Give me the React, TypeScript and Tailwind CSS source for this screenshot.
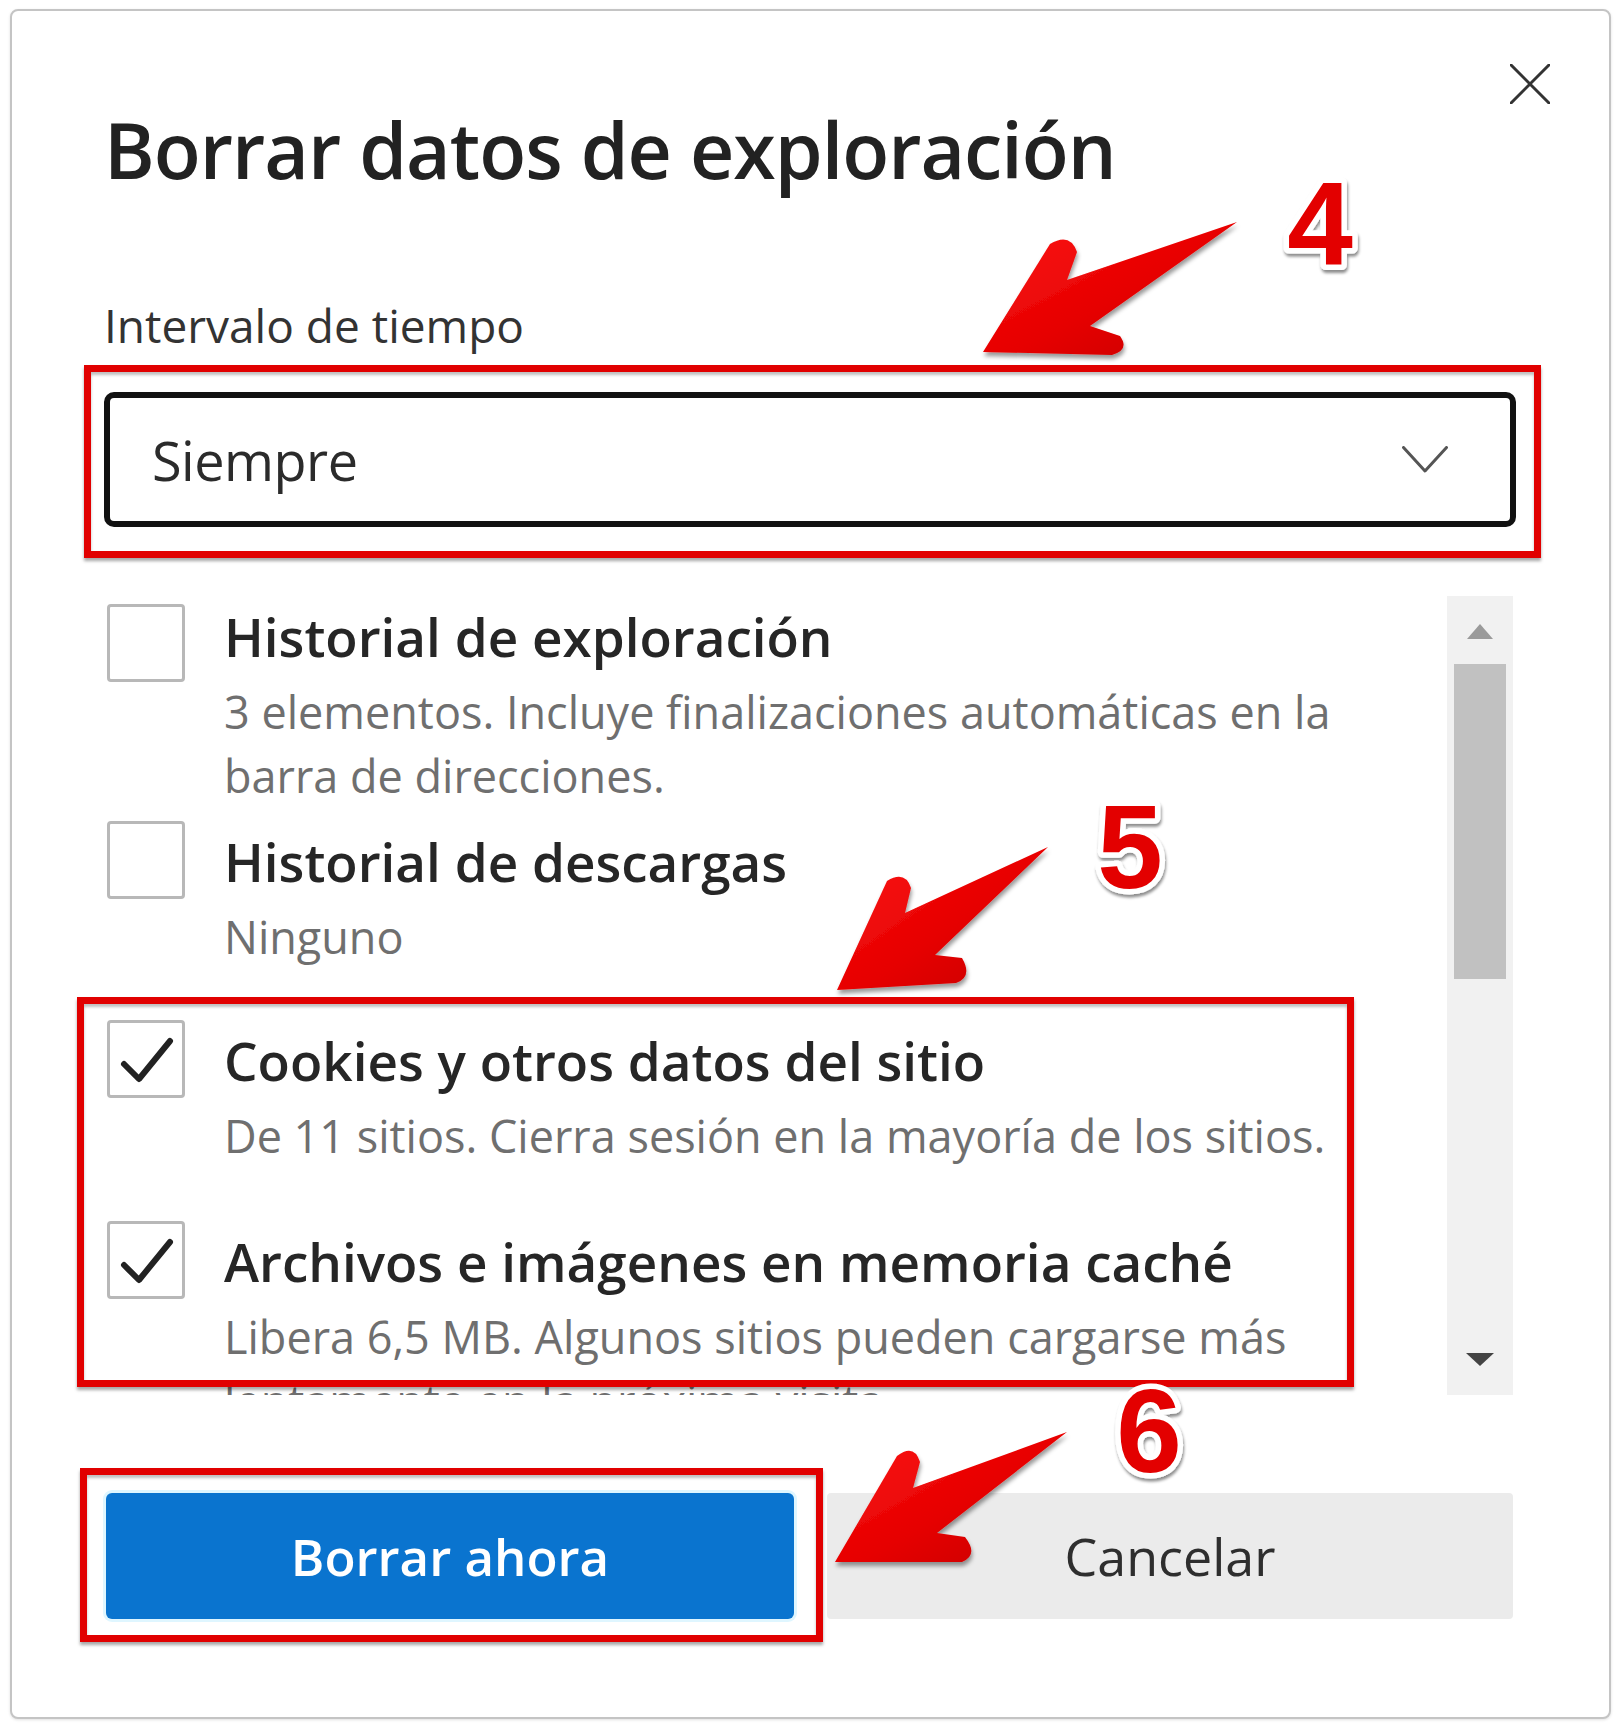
import React from "react";

const UI = { fontFamily: '"Open Sans", "Noto Sans", Arial, sans-serif' };

function Check() {
  return (
    <svg width="72" height="72" viewBox="0 0 72 72" className="block">
      <path d="M14 41 L29 56 L60 18" fill="none" stroke="#222" strokeWidth="6" strokeLinecap="round" strokeLinejoin="round" />
    </svg>
  );
}

function Item({
  mt,
  boxMt,
  checked,
  title,
  lines,
}: {
  mt: string;
  boxMt: string;
  checked: boolean;
  title: string;
  lines: string[];
}) {
  return (
    <div className={`flex items-start ${mt}`}>
      <div className={`${boxMt} flex h-[78px] w-[78px] shrink-0 items-center justify-center rounded-[4px] border-[3px] border-[#b8b8b8] bg-white`}>
        {checked ? <Check /> : null}
      </div>
      <div className="ml-[39px] flex flex-col">
        <div className="whitespace-nowrap text-[53px] font-semibold leading-[76px] text-[#262626]">{title}</div>
        <div className="mt-[5px] flex flex-col">
          {lines.map((l, i) => (
            <div key={i} className="whitespace-nowrap text-[45px] leading-[64px] text-[#6f6f6f]">
              {l}
            </div>
          ))}
        </div>
      </div>
    </div>
  );
}

export default function App() {
  return (
    <div className="relative h-[1728px] w-[1620px] overflow-hidden bg-white pl-[10px] pt-[9px]" style={UI}>
      {/* Dialog */}
      <div className="flex h-[1710px] w-[1601px] flex-col rounded-[8px] border-2 border-[#c4c4c4] bg-white pl-[92px] pr-[93px] pt-[53px] shadow-[0_1px_3px_rgba(0,0,0,0.12)]">
        {/* Header */}
        <div className="flex items-start justify-between">
          <div className="mt-[36px] whitespace-nowrap text-[77px] font-semibold leading-[100px] tracking-[-1px] text-[#222]">
            Borrar datos de exploración
          </div>
          <div className="-mr-[34px] h-[40px] w-[40px]">
            <svg width="40" height="40" viewBox="0 0 40 40" className="block">
              <path d="M1 1 L39 39 M39 1 L1 39" stroke="#333" strokeWidth="3" strokeLinecap="round" />
            </svg>
          </div>
        </div>

        {/* Label */}
        <div className="mt-[95px] text-[46px] leading-[60px] text-[#333]">Intervalo de tiempo</div>

        {/* Select */}
        <div className="mt-[37px] flex h-[135px] items-center justify-between rounded-[10px] border-[6px] border-[#111] pl-[42px] pr-[62px]">
          <span className="text-[54px] leading-none tracking-[-0.5px] text-[#2b2b2b]">Siempre</span>
          <svg width="46" height="27" viewBox="0 0 46 27" className="block">
            <path d="M1.5 1.5 L23 25 L44.5 1.5" fill="none" stroke="#555" strokeWidth="3" strokeLinecap="round" strokeLinejoin="round" />
          </svg>
        </div>

        {/* List */}
        <div className="mt-[69px] flex h-[799px]">
          <div className="flex w-[1343px] flex-col overflow-hidden pl-[3px]">
            <Item
              mt="mt-[3px]"
              boxMt="mt-[5px]"
              checked={false}
              title="Historial de exploración"
              lines={["3 elementos. Incluye finalizaciones automáticas en la", "barra de direcciones."]}
            />
            <Item mt="mt-[16px]" boxMt="-mt-[3px]" checked={false} title="Historial de descargas" lines={["Ninguno"]} />
            <Item
              mt="mt-[54px]"
              boxMt="-mt-[3px]"
              checked={true}
              title="Cookies y otros datos del sitio"
              lines={["De 11 sitios. Cierra sesión en la mayoría de los sitios."]}
            />
            <Item
              mt="mt-[56px]"
              boxMt="-mt-[3px]"
              checked={true}
              title="Archivos e imágenes en memoria caché"
              lines={["Libera 6,5 MB. Algunos sitios pueden cargarse más", "lentamente en la próxima visita."]}
            />
          </div>
          {/* Scrollbar */}
          <div className="flex w-[66px] flex-col items-center bg-[#f1f1f1] pt-[27px]">
            <svg width="28" height="17" viewBox="0 0 28 17" className="block">
              <path d="M14 1 L27 16 L1 16 Z" fill="#9a9a9a" />
            </svg>
            <div className="mt-[24px] h-[315px] w-[52px] bg-[#c1c1c1]" />
            <div className="flex-1" />
            <svg width="30" height="15" viewBox="0 0 30 15" className="mb-[28px] block">
              <path d="M1 1 L29 1 L15 14 Z" fill="#444" />
            </svg>
          </div>
        </div>

        {/* Buttons */}
        <div className="mt-[98px] flex">
          <div className="ml-[2px] flex h-[126px] w-[688px] items-center justify-center rounded-[6px] bg-[#0a74cf] text-[51px] font-semibold text-white shadow-[0_0_0_3px_#dff6ff]">
            Borrar ahora
          </div>
          <div className="ml-[33px] flex h-[126px] w-[686px] items-center justify-center rounded-[4px] bg-[#ebebeb] text-[52px] text-[#2e2e2e]">
            Cancelar
          </div>
        </div>
      </div>

      {/* Red annotation boxes */}
      <div className="pointer-events-none absolute left-[84px] top-[365px] h-[193px] w-[1457px] border-[7px] border-[#e10000] shadow-[0_3px_3px_rgba(0,0,0,0.35),inset_0_3px_3px_rgba(0,0,0,0.25)]" />
      <div className="pointer-events-none absolute left-[77px] top-[997px] h-[390px] w-[1277px] border-[7px] border-[#e10000] shadow-[0_3px_3px_rgba(0,0,0,0.35),inset_0_3px_3px_rgba(0,0,0,0.25)]" />
      <div className="pointer-events-none absolute left-[80px] top-[1468px] h-[174px] w-[743px] border-[7px] border-[#e10000] shadow-[0_3px_3px_rgba(0,0,0,0.35),inset_0_3px_3px_rgba(0,0,0,0.25)]" />

      {/* Arrows and numbers */}
      <svg className="pointer-events-none absolute left-0 top-0" width="1620" height="1728" viewBox="0 0 1620 1728">
        <defs>
          <linearGradient id="ag" x1="0" y1="0" x2="1" y2="1">
            <stop offset="0" stopColor="#ff1a1a" />
            <stop offset="0.55" stopColor="#e60000" />
            <stop offset="1" stopColor="#c40000" />
          </linearGradient>
          <filter id="ds" x="-20%" y="-20%" width="140%" height="140%">
            <feDropShadow dx="1" dy="4" stdDeviation="2" floodColor="#000" floodOpacity="0.4" />
          </filter>
          <filter id="ns" x="-30%" y="-30%" width="160%" height="160%">
            <feDropShadow dx="1" dy="3" stdDeviation="1.5" floodColor="#000" floodOpacity="0.45" />
          </filter>
        </defs>
        <g filter="url(#ds)" fill="url(#ag)">
          <path d="M1237 222 L1067 280 L1077 252 Q1070 232 1050 244 L983 352 L1112 355 Q1130 350 1120 336 L1090 326 Z" />
          <path d="M1048 847 L905 913 L911 888 Q905 870 887 881 L837 990 L956 983 Q973 977 962 958 L935 955 Z" />
          <path d="M1067 1432 L913 1488 L920 1462 Q914 1443 897 1456 L835 1562 L962 1562 Q979 1555 965 1537 L937 1533 Z" />
        </g>
        <g
          filter="url(#ns)"
          fontFamily='"Liberation Sans", Arial, sans-serif'
          fontWeight="700"
          fontSize="118"
          fill="#e30000"
          stroke="#fff"
          strokeWidth="11"
          strokeLinejoin="round"
          textAnchor="middle"
          style={{ paintOrder: "stroke" }}
        >
          <text x="1320" y="265">4</text>
          <text x="1130" y="888">5</text>
          <text x="1149" y="1472">6</text>
        </g>
      </svg>
    </div>
  );
}
